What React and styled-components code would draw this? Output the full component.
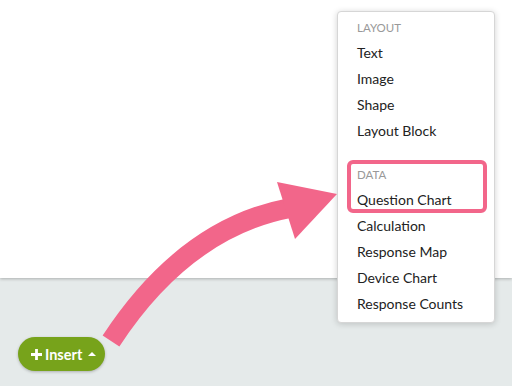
import React from "react";
import styled, { createGlobalStyle } from "styled-components";

const Global = createGlobalStyle`
  html, body { margin: 0; padding: 0; }
  body { font-family: Lato, "Open Sans", Arial, sans-serif; background: #e5eaea; }
  #root { width: 512px; height: 386px; overflow: hidden; }
`;

const Page = styled.div`
  position: relative;
  width: 512px;
  height: 386px;
  display: flex;
  flex-direction: column;
  background: #e5eaea;
  overflow: hidden;
`;

const Canvas = styled.div`
  height: 278px;
  flex: none;
  background: #ffffff;
  box-shadow: 0 1px 3px rgba(0, 0, 0, 0.25);
  position: relative;
  z-index: 1;
`;

const Footer = styled.div`
  flex: 1;
  display: flex;
  align-items: flex-start;
  padding: 59px 0 0 18px;
`;

const InsertButton = styled.button`
  display: inline-flex;
  align-items: center;
  gap: 3px;
  height: 34px;
  width: 87px;
  padding: 0 0 0 13px;
  border: none;
  border-radius: 17px;
  background: #77a31b;
  color: #ffffff;
  font-family: Lato, Arial, sans-serif;
  font-weight: 700;
  font-size: 14.5px;
  box-shadow: 0 1px 3px rgba(0, 0, 0, 0.25);
`;

const Caret = styled.span`
  width: 0;
  height: 0;
  margin-left: 3px;
  border-left: 4px solid transparent;
  border-right: 4px solid transparent;
  border-bottom: 4px solid #ffffff;
`;

const Menu = styled.div`
  position: absolute;
  top: 11px;
  left: 337px;
  width: 156px;
  padding: 4px 0 5px;
  background: #ffffff;
  border: 1px solid #d6d6d6;
  border-radius: 4px;
  box-shadow: 0 1px 6px rgba(0, 0, 0, 0.18);
  z-index: 5;
`;

const Header = styled.div`
  height: 24px;
  line-height: 24px;
  padding-left: 19px;
  font-size: 11.5px;
  color: #999999;
  text-transform: uppercase;
`;

const Item = styled.div`
  height: 26px;
  line-height: 26px;
  padding-left: 19px;
  font-size: 14px;
  color: #222222;
  white-space: nowrap;
`;

const Spacer = styled.div`
  height: 19px;
`;

const Highlight = styled.div`
  position: relative;
  &::after {
    content: "";
    position: absolute;
    top: -3px;
    bottom: 0;
    left: 9px;
    right: 7px;
    border: 4px solid #f2668a;
    border-radius: 6px;
    pointer-events: none;
  }
`;

const ArrowLayer = styled.svg`
  position: absolute;
  left: 0;
  top: 0;
  width: 512px;
  height: 386px;
  pointer-events: none;
  z-index: 10;
`;

export default function App() {
  return (
    <Page>
      <Global />
      <Canvas />
      <Footer>
        <InsertButton>
          <svg width="11" height="11" viewBox="0 0 11 11">
            <path d="M5.5 0v11M0 5.5h11" stroke="#fff" strokeWidth="2.8" />
          </svg>
          Insert
          <Caret />
        </InsertButton>
      </Footer>
      <Menu>
        <Header>Layout</Header>
        <Item>Text</Item>
        <Item>Image</Item>
        <Item>Shape</Item>
        <Item>Layout Block</Item>
        <Spacer />
        <Highlight>
          <Header>Data</Header>
          <Item>Question Chart</Item>
        </Highlight>
        <Item>Calculation</Item>
        <Item>Response Map</Item>
        <Item>Device Chart</Item>
        <Item>Response Counts</Item>
      </Menu>
      <ArrowLayer viewBox="0 0 512 386">
        <path
          d="M111 341 Q185 228 290 208"
          fill="none"
          stroke="#f2668a"
          strokeWidth="20"
        />
        <polygon points="277,182 337,194 295,239" fill="#f2668a" />
      </ArrowLayer>
    </Page>
  );
}
